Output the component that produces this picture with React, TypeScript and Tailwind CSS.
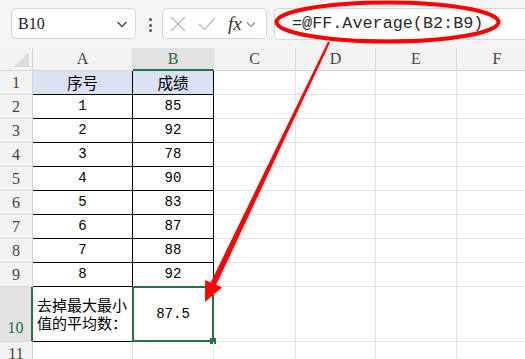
import { clsx as cn } from 'clsx';

const scores = ['85', '92', '78', '90', '83', '87', '88', '92'];
const cols = ['A', 'B', 'C', 'D', 'E', 'F'];

const serif = { fontFamily: '"Liberation Serif", "DejaVu Serif", serif' };

function Toolbar() {
  return (
    <div className="flex h-[48px] items-start gap-0 bg-[#f4f4f5] pt-[8px]">
      {/* name box */}
      <div className="ml-[11px] flex h-[31px] w-[125px] items-center justify-between rounded-[5px] border border-[#d6d6d6] bg-white pl-[6px] pr-[6px]">
        <span className="text-[16px] text-[#1b1b1b]" style={serif}>B10</span>
        <svg width="14" height="14" viewBox="0 0 14 14" fill="none" stroke="#444" strokeWidth="1.3">
          <path d="M2.5 5 L7 9.5 L11.5 5" />
        </svg>
      </div>
      {/* dots */}
      <div className="ml-[12px] mt-[10px] flex w-[4px] flex-col items-center gap-[2.5px]">
        <span className="h-[3px] w-[3px] rounded-full bg-[#555]" />
        <span className="h-[3px] w-[3px] rounded-full bg-[#555]" />
        <span className="h-[3px] w-[3px] rounded-full bg-[#555]" />
      </div>
      {/* cancel / enter / fx */}
      <div className="ml-[10px] flex h-[31px] w-[105px] items-center rounded-[5px] border border-[#d6d6d6] bg-white pl-[6px]">
        <svg width="18" height="18" viewBox="0 0 18 18" fill="none" stroke="#b8b8b8" strokeWidth="1.2">
          <path d="M2 2 L16 16 M16 2 L2 16" />
        </svg>
        <svg className="ml-[10px]" width="20" height="18" viewBox="0 0 20 18" fill="none" stroke="#b8b8b8" strokeWidth="1.2">
          <path d="M2 9 L7.5 14.5 L18 3" />
        </svg>
        <span className="ml-[11px] text-[19px] italic leading-none text-[#333]" style={serif}>fx</span>
        <svg className="ml-[3px]" width="12" height="12" viewBox="0 0 12 12" fill="none" stroke="#888" strokeWidth="1.1">
          <path d="M2 4.5 L6 8.5 L10 4.5" />
        </svg>
      </div>
      {/* formula */}
      <div className="ml-[7px] flex h-[32px] flex-1 items-center rounded-l-[5px] border border-r-0 border-[#d6d6d6] bg-white pl-[17px]">
        <span
          className="whitespace-nowrap text-[16.8px] text-[#2b2b2b]"
          style={{ fontFamily: '"Liberation Mono", "DejaVu Sans Mono", monospace' }}
        >
          =@FF.Average(B2:B9)
        </span>
      </div>
    </div>
  );
}

function Sheet() {
  const rows = Array.from({ length: 11 }, (_, i) => i + 1);
  const mono = { fontFamily: '"Liberation Mono", "DejaVu Sans Mono", monospace' };
  const cjk = { fontFamily: '"Noto Sans CJK SC", "Noto Sans", sans-serif' };

  return (
    <div className="grid w-[538px] grid-cols-[33px_100px_81px_82px_80px_81px_81px] grid-rows-[23px_repeat(9,24px)_55px_24px] bg-white">
      {/* corner */}
      <div className="relative border-b border-r border-[#d4d4d4] bg-[#f3f3f3]">
        <svg className="absolute bottom-[3px] right-[3px]" width="15" height="15" viewBox="0 0 15 15">
          <path d="M15 0 L15 15 L0 15 Z" fill="#dcdcdc" />
        </svg>
      </div>
      {cols.map((c) => (
        <div
          key={c}
          className={cn(
            'flex items-center justify-center border-r border-[#dadada] text-[16px]',
            c === 'B'
              ? 'border-b-2 border-b-[#217346] bg-[#e2e2e2] text-[#1e6e42]'
              : 'border-b border-b-[#d4d4d4] bg-[#f3f3f3] text-[#444]'
          )}
          style={serif}
        >
          {c}
        </div>
      ))}

      {rows.map((r) => {
        const inTable = r <= 10;
        const aText = r === 1 ? '序号' : r <= 9 ? String(r - 1) : '';
        const bText = r === 1 ? '成绩' : r === 10 ? '87.5' : r <= 9 ? scores[r - 2] : '';
        return [
          <div
            key={`h${r}`}
            className={cn(
              'flex justify-center border-b border-[#dadada] text-[16px]',
              r === 10
                ? 'items-end border-r-2 border-r-[#217346] bg-[#e2e2e2] pb-[1px] text-[#1e6e42]'
                : 'items-center border-r border-r-[#d4d4d4] bg-[#f3f3f3] text-[#444]'
            )}
            style={serif}
          >
            {r}
          </div>,
          <div
            key={`a${r}`}
            className={cn(
              'flex items-center border-b border-r',
              inTable ? 'border-black' : 'border-[#e1e1e1]',
              r === 1 && 'bg-[#d9e1f2]',
              r === 10 ? 'justify-start pl-[4px]' : 'justify-center'
            )}
          >
            {r === 10 ? (
              <span className="whitespace-nowrap text-[15px] leading-[18px] text-black" style={cjk}>
                去掉最大最小
                <br />
                值的平均数：
              </span>
            ) : (
              <span className="text-[14px] text-black" style={r === 1 ? { ...cjk, fontSize: 15.5 } : mono}>
                {aText}
              </span>
            )}
          </div>,
          <div
            key={`b${r}`}
            className={cn(
              'relative flex items-center justify-center border-b border-r',
              inTable ? 'border-black' : 'border-[#e1e1e1]',
              r === 1 && 'bg-[#d9e1f2]'
            )}
          >
            <span className="text-[14px] text-black" style={r === 1 ? { ...cjk, fontSize: 15.5 } : mono}>
              {bText}
            </span>
            {r === 10 && (
              <div className="absolute -left-[1px] -top-[1px] bottom-[-1px] right-[-1px] border-2 border-[#217346]">
                <span className="absolute -bottom-[4px] -right-[4px] h-[6px] w-[6px] bg-[#217346]" />
              </div>
            )}
          </div>,
          ...['C', 'D', 'E', 'F'].map((c) => (
            <div key={`${c}${r}`} className="border-b border-r border-[#e1e1e1]" />
          )),
        ];
      })}
    </div>
  );
}

export default function App() {
  return (
    <div className="relative h-[359px] w-[525px] overflow-hidden bg-white">
      <Toolbar />
      <Sheet />
      {/* red annotation */}
      <svg className="pointer-events-none absolute left-0 top-0" width="525" height="359" viewBox="0 0 525 359">
        <ellipse cx="387.5" cy="22" rx="111" ry="19.5" fill="none" stroke="#ff0000" strokeWidth="4" />
        <polygon points="330,42.4 328,41.6 210.7,282.5 216.1,285.1" fill="#ff0000" />
        <polygon points="205,302 205.2,280 222,287.6" fill="#ff0000" />
      </svg>
    </div>
  );
}
